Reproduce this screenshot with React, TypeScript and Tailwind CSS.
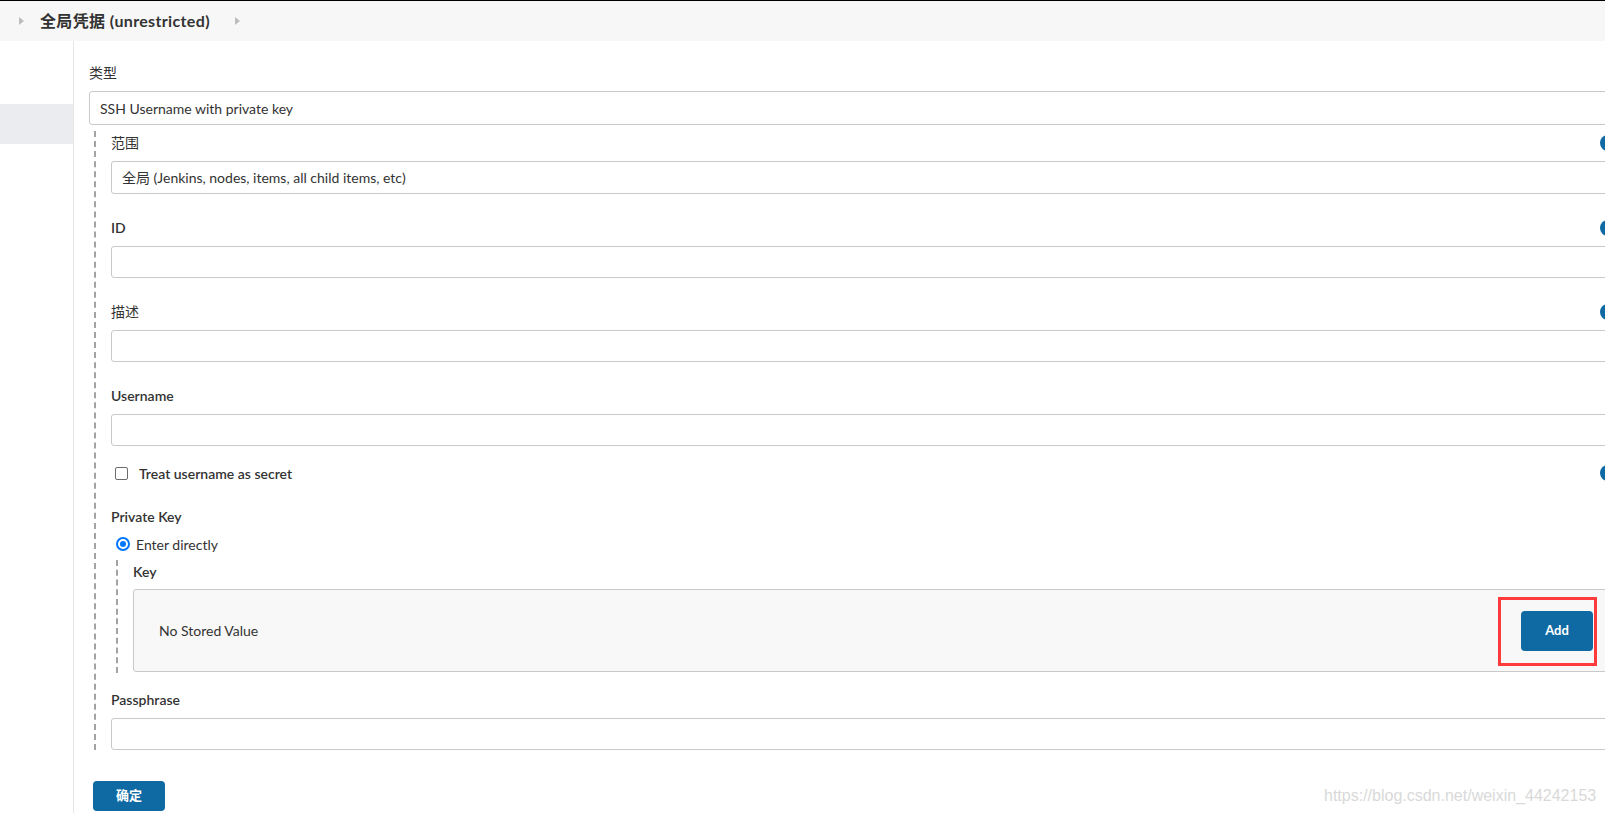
import React from "react";

function HelpIcon() {
  return <span className="w-[16px] h-[16px] rounded-full bg-[#0f6aa3] shrink-0" />;
}

function Label({ text, help = false, cjk = false }: { text: string; help?: boolean; cjk?: boolean }) {
  return (
    <div className="h-[20px] flex items-center justify-between">
      <span className={cjk ? "text-[14px] font-normal -mt-[1px]" : "text-[14px] font-semibold -mt-[1px]"}>{text}</span>
      {help ? <HelpIcon /> : null}
    </div>
  );
}

function Input() {
  return <div className="h-[32px] mt-[8px] border border-[#c9c9c9] rounded-[3px] bg-white" />;
}

export default function App() {
  return (
    <div className="relative w-[1605px] h-[813px] overflow-hidden bg-white text-[#333] font-['Lato','Noto_Sans_CJK_SC',sans-serif] border-t border-black">
      {/* breadcrumb */}
      <div className="h-[40px] bg-[#f7f7f7] flex items-center pl-[19px]">
        <svg width="5" height="8" viewBox="0 0 5 8" className="shrink-0">
          <path d="M0 0 L5 4 L0 8 Z" fill="#bdbdbd" />
        </svg>
        <span className="ml-[16px] text-[16px] font-bold tracking-[0.35px] text-[#333]">全局凭据 (unrestricted)</span>
        <svg width="5" height="8" viewBox="0 0 5 8" className="shrink-0 ml-[25px]">
          <path d="M0 0 L5 4 L0 8 Z" fill="#bdbdbd" />
        </svg>
      </div>

      <div className="flex h-[772px]">
        {/* sidebar */}
        <div className="w-[74px] shrink-0 border-r border-[#e6e6e6] pt-[63px]">
          <div className="h-[40px] bg-[#eaecef]" />
        </div>

        {/* main */}
        <div className="shrink-0 pl-[15px] pt-[22px]">
          <div className="w-[1527px]">
            <Label text="类型" cjk />
            <div className="h-[34px] mt-[8px] border border-[#c9c9c9] rounded-[3px] bg-white flex items-center pl-[10px] text-[14px]">
              SSH Username with private key
            </div>

            <div className="ml-[5px] mt-[6px] border-l-2 border-dashed border-[#a3a3a3] pl-[15px] pt-[2px]">
              <Label text="范围" cjk help />
              <div className="h-[33px] mt-[8px] border border-[#c9c9c9] rounded-[3px] bg-white flex items-center pl-[10px] text-[14px]">
                全局 (Jenkins, nodes, items, all child items, etc)
              </div>

              <div className="mt-[24px]">
                <Label text="ID" help />
                <Input />
              </div>

              <div className="mt-[24px]">
                <Label text="描述" cjk help />
                <Input />
              </div>

              <div className="mt-[24px]">
                <Label text="Username" />
                <Input />
              </div>

              <div className="mt-[17px] h-[20px] flex items-center justify-between">
                <label className="flex items-center">
                  <span className="ml-[4px] w-[13px] h-[13px] border border-[#6b6b6b] rounded-[2px] bg-white" />
                  <span className="ml-[11px] text-[14px] font-semibold">Treat username as secret</span>
                </label>
                <HelpIcon />
              </div>

              <div className="mt-[24px]">
                <Label text="Private Key" />
              </div>

              <div className="mt-[7px] h-[20px] flex items-center">
                <span className="ml-[5px] w-[14px] h-[14px] rounded-full border-2 border-[#0075ff] bg-white flex items-center justify-center">
                  <span className="w-[6px] h-[6px] rounded-full bg-[#0075ff]" />
                </span>
                <span className="ml-[6px] text-[14px] font-normal">Enter directly</span>
              </div>

              <div className="ml-[5px] mt-[6px] border-l-2 border-dashed border-[#a3a3a3] pl-[15px] pt-[2px] pb-[1px]">
                <Label text="Key" />
                <div className="h-[83px] mt-[7px] border border-[#c9c9c9] rounded-[3px] bg-[#f8f8f8] flex items-center justify-between pl-[25px] pr-[22px]">
                  <span className="text-[14px]">No Stored Value</span>
                  <button className="w-[72px] h-[40px] rounded-[4px] bg-[#0f6aa3] text-white text-[13px] font-bold">
                    Add
                  </button>
                </div>
              </div>

              <div className="mt-[17px]">
                <Label text="Passphrase" />
                <Input />
              </div>
            </div>

            <button className="mt-[31px] ml-[4px] w-[72px] h-[30px] rounded-[4px] bg-[#0f6aa3] text-white text-[13px] font-bold">
              确定
            </button>
          </div>
        </div>
      </div>

      {/* annotation */}
      <div className="absolute left-[1498px] top-[596px] w-[99px] h-[69px] border-[3px] border-[#ff3b3b]" />
      <div className="absolute left-[1324px] top-[783px] text-[16px] text-[#d9d9d9] font-['Liberation_Sans',sans-serif] whitespace-nowrap">
        https://blog.csdn.net/weixin_44242153
      </div>
    </div>
  );
}
